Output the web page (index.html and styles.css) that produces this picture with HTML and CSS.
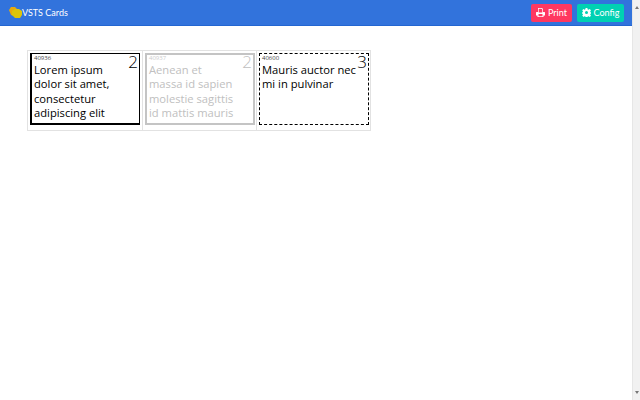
FILE: index.html
```html
<!DOCTYPE html>
<html lang="en">
<head>
<meta charset="utf-8">
<title>VSTS Cards</title>
<link rel="stylesheet" href="styles.css">
</head>
<body>
<div class="app">
  <header class="navbar">
    <div class="brand">
      <svg class="logo" width="13" height="11" viewBox="0 0 13 11"><path class="logo-back" d="M0 3 2 0h4l2 2v5L5 9 2 8z"/><path class="logo-front" d="M3 4l3-2h4l3 2v4l-2 3H6L3 8z"/></svg>
      <span>VSTS Cards</span>
    </div>
    <div class="actions">
      <a class="btn btn-print">
        <svg width="9" height="9" viewBox="0 0 9 9"><path fill="#fff" fill-rule="evenodd" d="M2 0h4l1 1v3h1.500l.5.500V7.500H7.500V9h-6V7.500H0v-3L.5 4H2zm.7.800V4.500h3.600V1.600L5.500.800zM2.500 6v2.200h4V6z"/></svg>
        Print
      </a>
      <a class="btn btn-config">
        <svg width="9" height="9" viewBox="0 0 9 9"><path fill="#fff" fill-rule="evenodd" d="M3.600 0h1.800l.2 1.300.8.400L7.700 1 9 2.300 8.200 3.400l.3.800.5.200v1.200l-.5.200-.3.800.8 1.100L7.700 9l-1.100-.8-.8.300-.4.500H3.600l-.2-.5-.8-.3L1.500 9 .2 7.500 1 6.600l-.3-.8L0 5.600V4.400l.7-.2.3-.8L.2 2.300 1.500 1l1.100.7.8-.4zM4.500 3a1.500 1.500 0 1 0 0 3 1.500 1.500 0 0 0 0-3z"/></svg>
        Config
      </a>
    </div>
  </header>
  <main class="board">
    <div class="cell"><article class="card card-active"><span class="id">40936</span><span class="points">2</span><p>Lorem ipsum dolor sit amet, consectetur adipiscing elit</p></article></div>
    <div class="cell"><article class="card card-faded"><span class="id">40937</span><span class="points">2</span><p>Aenean et<br>massa id sapien<br>molestie sagittis<br>id mattis mauris</p></article></div>
    <div class="cell"><article class="card card-dashed"><span class="id">40600</span><span class="points">3</span><p>Mauris auctor nec mi in pulvinar</p></article></div>
  </main>
</div>
<div class="scrollbar">
  <span class="arrow arrow-up"></span>
  <span class="arrow arrow-down"></span>
</div>
</body>
</html>
```
FILE: styles.css
```css
* { box-sizing: border-box; }
html, body { height: 100%; }
body {
  margin: 0;
  display: flex;
  overflow: hidden;
  background: #fff;
  font-family: "Open Sans", "Noto Sans", sans-serif;
  color: #000;
}
.app { flex: 1; min-width: 0; }
.navbar {
  height: 26px;
  display: flex;
  align-items: center;
  justify-content: space-between;
  padding: 0 8px 0 9px;
  background: #3273dc;
  border-bottom: 1px solid #2366d1;
  font-family: Lato, "Open Sans", sans-serif;
}
.brand {
  display: flex;
  align-items: center;
  gap: 0;
  color: #fff;
  font-size: 9px;
}
.logo-back { fill: #e8a90c; }
.logo-front { fill: #dcc40a; }
.actions { display: flex; gap: 5px; }
.btn {
  width: 41px;
  height: 18px;
  display: flex;
  align-items: center;
  justify-content: center;
  gap: 3px;
  border-radius: 2px;
  color: #fff;
  font-size: 9px;
}
.btn-print { background: #ff3860; }
.btn-config { width: 47px; background: #00d1b2; }
.board {
  display: flex;
  margin: 24px 0 0 27px;
  width: max-content;
  border: 1px solid #e2e2e2;
}
.cell {
  width: 114px;
  height: 79px;
  padding: 2px 2px 5px 2px;
}
.cell + .cell { border-left: 1px solid #e2e2e2; padding-left: 2px; }
.card {
  height: 72px;
  width: 110px;
  padding: 1px 1px 0 2px;
}
.card-active { border: 1px solid #000; border-left-width: 2px; border-bottom-width: 2px; }
.card-faded { border: 2px solid #c4c4c4; color: #c0c0c0; padding: 0 1px 0 2px; }
.card-dashed { border: 1px dashed #000; padding-left: 2px; }
.id { display: block; font-size: 6px; line-height: 7px; color: #444; }
.card-faded .id { color: #ccc; }
.points {
  float: right;
  height: 15px;
  margin-top: -9px;
  font-size: 17px;
  line-height: 18px;
  font-weight: 300;
}
.card p {
  margin: 1px 0 0;
  font-size: 11.200px;
  line-height: 14.400px;
}
.scrollbar {
  width: 8px;
  flex: none;
  display: flex;
  flex-direction: column;
  justify-content: space-between;
  align-items: center;
  padding: 4px 0;
  background: #f1f1f1;
  border-left: 1px solid #e6e6e6;
}
.arrow { width: 0; height: 0; border: 2px solid transparent; }
.arrow-up { border-bottom: 3px solid #777; }
.arrow-down { border-top: 3px solid #777; }
```
